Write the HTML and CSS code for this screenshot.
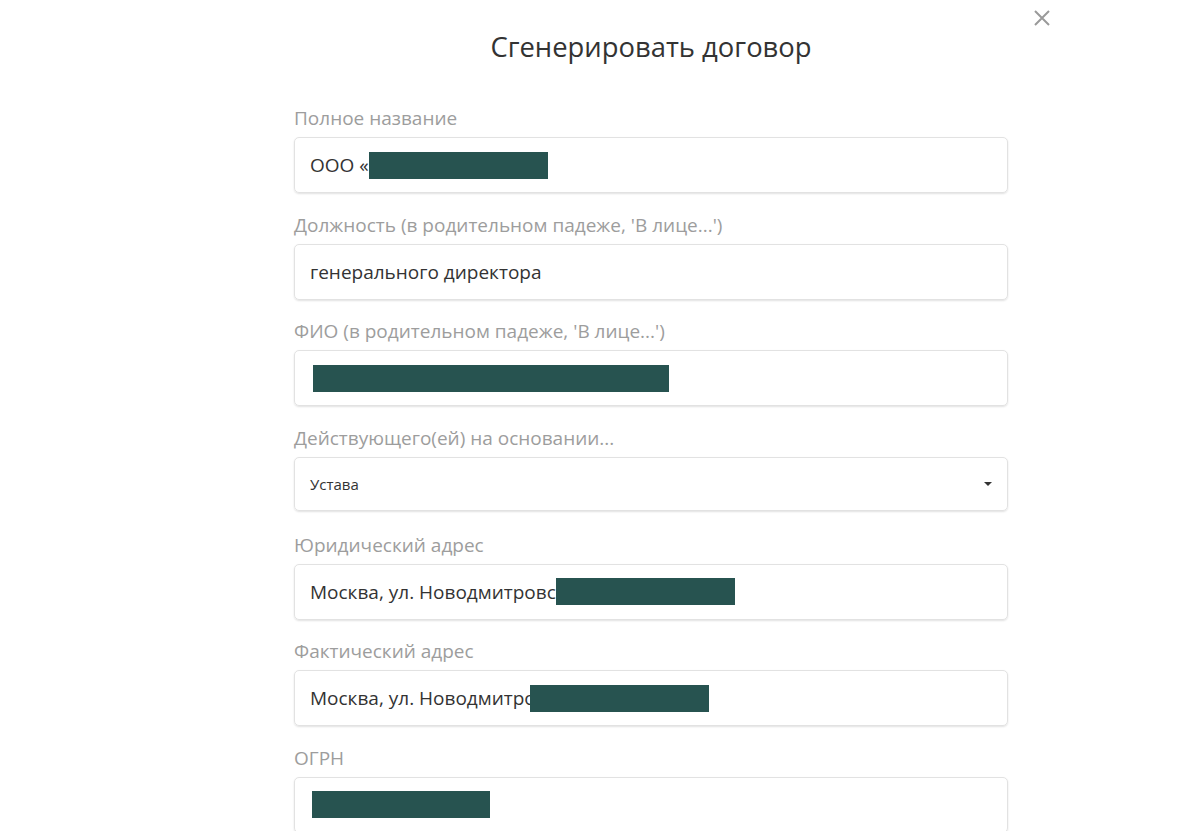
FILE: index.html
```html
<!DOCTYPE html>
<html lang="ru">
<head>
<meta charset="utf-8">
<title>Сгенерировать договор</title>
<link rel="stylesheet" href="styles.css">
</head>
<body>
<div class="modal">
  <button class="close" aria-label="Закрыть">
    <svg width="18" height="18" viewBox="0 0 18 18"><path d="M2 2 L16 16 M16 2 L2 16" stroke="#9a9a9a" stroke-width="2" fill="none"/></svg>
  </button>
  <h1 class="title">Сгенерировать договор</h1>
  <form class="form">
    <div class="group">
      <label class="label">Полное название</label>
      <div class="input"><span class="val">ООО «</span><span class="redact r1"></span></div>
    </div>
    <div class="group">
      <label class="label">Должность (в родительном падеже, 'В лице...')</label>
      <div class="input"><span class="val">генерального директора</span></div>
    </div>
    <div class="group">
      <label class="label">ФИО (в родительном падеже, 'В лице...')</label>
      <div class="input"><span class="redact r2"></span></div>
    </div>
    <div class="group">
      <label class="label">Действующего(ей) на основании...</label>
      <div class="input select"><span class="sval">Устава</span><span class="caret"></span></div>
    </div>
    <div class="group">
      <label class="label">Юридический адрес</label>
      <div class="input"><span class="val">Москва, ул. Новодмитровс</span><span class="redact r1"></span></div>
    </div>
    <div class="group">
      <label class="label">Фактический адрес</label>
      <div class="input"><span class="val">Москва, ул. Новодмитро</span><span class="redact r1 overlap"></span></div>
    </div>
    <div class="group">
      <label class="label">ОГРН</label>
      <div class="input"><span class="redact r3"></span></div>
    </div>
  </form>
</div>
</body>
</html>
```
FILE: styles.css
```css
html, body {
  margin: 0;
  padding: 0;
  background: #fff;
  height: 100%;
  overflow: hidden;
}
body {
  font-family: "Open Sans", "Noto Sans", sans-serif;
  color: #333;
}
.modal {
  position: relative;
  width: 714px;
  margin-left: 262px;
  padding: 0 52px 0 32px;
}
.close {
  position: absolute;
  top: 8px;
  right: 8px;
  width: 20px;
  height: 20px;
  padding: 1px;
  border: 0;
  background: none;
  display: flex;
  align-items: center;
  justify-content: center;
}
.title {
  margin: 0;
  padding-top: 28px;
  height: 100px;
  box-sizing: border-box;
  text-align: center;
  font-weight: 400;
  font-size: 27.4px;
  line-height: 38px;
  color: #333;
}
.form {
  display: flex;
  flex-direction: column;
}
.group {
  display: flex;
  flex-direction: column;
  height: 106.67px;
}
.label {
  font-size: 19px;
  line-height: 26px;
  color: #9d9d9d;
  margin-top: 5px;
  margin-bottom: 6px;
}
.input {
  box-sizing: border-box;
  height: 56px;
  border: 1px solid #e2e2e2;
  border-radius: 5px;
  box-shadow: 0 1px 2px rgba(0,0,0,0.12);
  padding: 0 15px;
  display: flex;
  align-items: center;
  font-size: 19px;
  color: #333;
}
.val {
  white-space: nowrap;
}
.redact {
  display: inline-block;
  height: 27px;
  background: #275350;
}
.r1 { width: 179px; }
.r1.overlap { margin-left: -6px; }
.r2 { width: 356px; margin-left: 3px; }
.r3 { width: 178px; margin-left: 2px; }
.select {
  height: 54px;
  justify-content: space-between;
}
.sval {
  font-size: 15px;
}
.caret {
  width: 0;
  height: 0;
  border-left: 4px solid transparent;
  border-right: 4px solid transparent;
  border-top: 4px solid #333;
  margin-right: 0;
}
```
